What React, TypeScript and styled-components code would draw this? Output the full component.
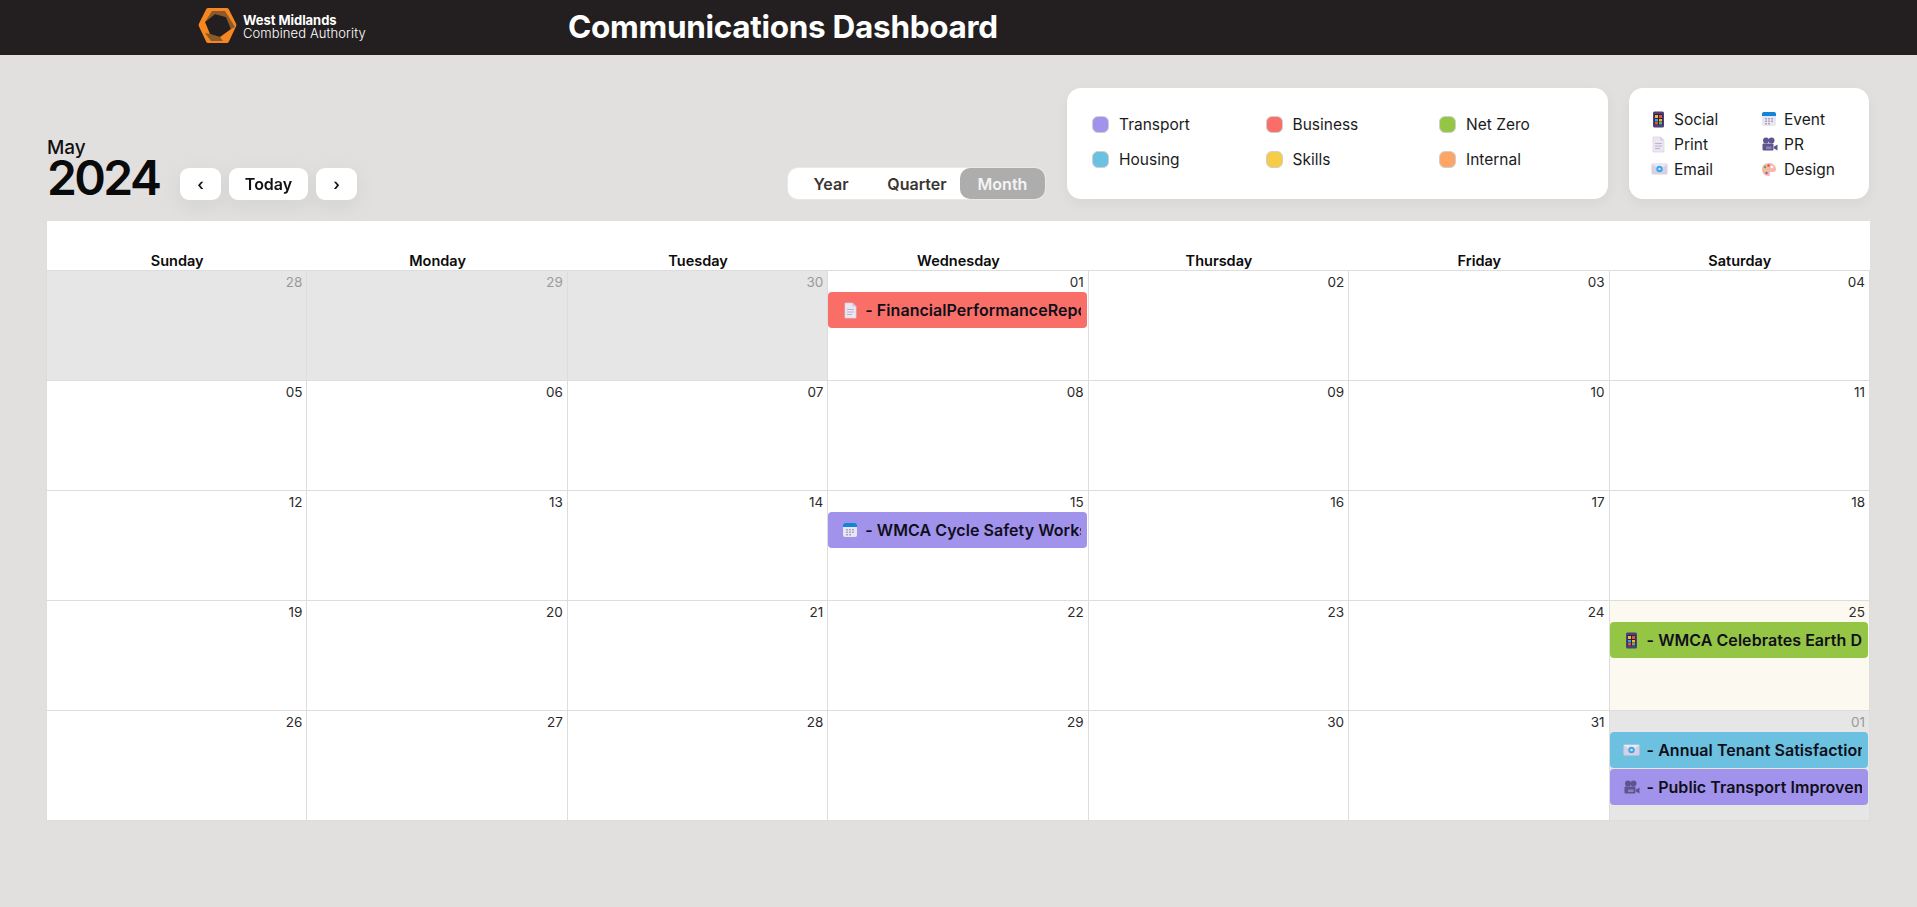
import React from "react"
import styled, { createGlobalStyle } from "styled-components"

const fontStack = `Inter, "Noto Sans", "Liberation Sans", sans-serif`

const colors = {
  transport: "#a192ec",
  business: "#f96f67",
  netZero: "#95c544",
  housing: "#6bc1df",
  skills: "#f6cc47",
  internal: "#fea465",
}

const GlobalStyle = createGlobalStyle`
  * { box-sizing: border-box; }
  html, body { margin: 0; padding: 0; background: #e1e0de; }
  body { font-family: ${fontStack}; color: #111; overflow: hidden; }
`

const Page = styled.div`
  width: 1917px;
  height: 907px;
  background: #e1e0de;
`

const Header = styled.header`
  height: 55px;
  background: #231f20;
  display: flex;
  align-items: center;
  padding: 0 0 2px 198px;
`

const LogoWrap = styled.div`
  width: 370px;
  display: flex;
  align-items: center;
  gap: 6px;
  color: #fff;
  svg { margin-bottom: 3px; }
`

const LogoText = styled.div`
  display: flex;
  flex-direction: column;
  font-size: 13px;
  line-height: 13px;
  letter-spacing: -0.05px;
  b { font-weight: 700; }
  span { font-weight: 300; letter-spacing: 0.1px; }
`

const Title = styled.h1`
  margin: 0;
  color: #fff;
  font-size: 31.500px;
  font-weight: 700;
  letter-spacing: -0.3px;
`

const Main = styled.main`
  padding: 33px 47px 0 46px;
`

const Toolbar = styled.div`
  height: 111px;
  display: flex;
  align-items: flex-end;
`

const DateBlock = styled.div`
  width: 134px;
  display: flex;
  flex-direction: column;
  padding-left: 1px;
  margin-bottom: 1px;
`

const Month = styled.div`
  font-size: 19px;
  font-weight: 500;
  line-height: 20px;
`

const Year = styled.div`
  font-size: 48px;
  font-weight: 600;
  line-height: 40px;
  letter-spacing: -2.600px;
  color: #0a0a0a;
`

const NavGroup = styled.div`
  display: flex;
  gap: 8px;
  margin-bottom: -1px;
  filter: drop-shadow(0 6px 10px rgba(0, 0, 0, 0.06));
`

const NavButton = styled.button<{ $wide?: boolean }>`
  width: ${p => (p.$wide ? 79 : 41)}px;
  height: 32px;
  border: 0;
  border-radius: 9px;
  background: #fff;
  font-family: ${fontStack};
  font-size: 16px;
  font-weight: 600;
  color: #111;
  padding: 0;
`

const ViewToggle = styled.div`
  margin-left: 431px;
  width: 257px;
  height: 31px;
  display: flex;
  background: #fff;
  border-radius: 10px;
  box-shadow: 0 0 0 1px #e8e8e8;
`

const ViewOption = styled.div<{ $active?: boolean; $width: number }>`
  width: ${p => p.$width}px;
  display: flex;
  align-items: center;
  justify-content: center;
  font-size: 16px;
  font-weight: 600;
  border-radius: 10px;
  color: ${p => (p.$active ? "#f4f4f4" : "#3b3533")};
  background: ${p => (p.$active ? "#adadad" : "transparent")};
`

const Card = styled.div`
  height: 111px;
  background: #fff;
  border-radius: 14px;
  box-shadow: 0 4px 14px rgba(0, 0, 0, 0.05);
`

const CategoryCard = styled(Card)`
  margin-left: 22px;
  width: 541px;
  padding: 24px 0 0 25px;
  display: grid;
  grid-template-columns: repeat(3, 173.500px);
  grid-auto-rows: 35px;
`

const TypeCard = styled(Card)`
  margin-left: 21px;
  width: 240px;
  padding: 19px 0 0 22px;
  display: grid;
  grid-template-columns: 110px 1fr;
  grid-auto-rows: 25px;
`

const LegendItem = styled.div`
  display: flex;
  align-items: center;
  height: 24px;
  font-size: 15.500px;
  color: #1b1b1b;
`

const Swatch = styled.span<{ $color: string }>`
  width: 17px;
  height: 17px;
  border-radius: 6px;
  background: ${p => p.$color};
  border: 1px solid #cfcfcf;
  margin-right: 10px;
`

const TypeIcon = styled.span`
  width: 23px;
  display: flex;
  justify-content: flex-start;
  align-items: center;
`

const Calendar = styled.div`
  margin-top: 22px;
  width: 1824px;
  background: #fff;
  display: grid;
  grid-template-columns: repeat(7, 1fr);
  border-left: 1px solid #ddd;
`

const DayHead = styled.div`
  height: 50px;
  display: flex;
  align-items: flex-end;
  justify-content: center;
  padding-bottom: 1px;
  font-size: 14.500px;
  font-weight: 600;
  color: #0c0c0c;
  border-bottom: 1px solid #ddd;
`

const DayCell = styled.div<{ $kind: "normal" | "off" | "today" }>`
  height: 110px;
  min-width: 0;
  border-right: 1px solid #ddd;
  border-bottom: 1px solid #ddd;
  background: ${p =>
    p.$kind === "off" ? "#e6e6e6" : p.$kind === "today" ? "#fcf9f1" : "#fff"};
`

const DayNumber = styled.div<{ $muted?: boolean }>`
  height: 21px;
  padding: 3px 4px 0 0;
  text-align: right;
  font-size: 13.500px;
  line-height: 17px;
  color: ${p => (p.$muted ? "#9a9a9a" : "#2a2a2a")};
`

const EventBar = styled.div<{ $color: string }>`
  height: 36px;
  margin: 0 1px 1px 0;
  border-radius: 4px;
  background: ${p => p.$color};
  display: flex;
  align-items: center;
  padding: 0 6px 0 10px;
  overflow: hidden;
  white-space: nowrap;
  font-size: 16px;
  font-weight: 600;
  letter-spacing: 0.05px;
  color: #0f0f1a;
`

const EventIcon = styled.span`
  flex: none;
  width: 24px;
  display: flex;
  justify-content: center;
  margin-right: 3px;
`

const EventText = styled.span`
  overflow: hidden;
`

const Social = () => (
  <svg width="15" height="17" viewBox="0 0 15 17">
    <rect x="2" y="0.500" width="11" height="16" rx="1.500" fill="#4d3f78" />
    <rect x="3.500" y="3" width="8" height="11" fill="#2b2340" />
    <rect x="4" y="4" width="3" height="3" fill="#f2b632" />
    <rect x="8" y="4" width="3" height="3" fill="#e5533d" />
    <rect x="4" y="8" width="3" height="2.500" fill="#3aa6e8" />
    <rect x="8" y="8" width="3" height="2.500" fill="#f2b632" />
    <rect x="4" y="11" width="3" height="2.500" fill="#e5533d" />
    <rect x="8" y="11" width="3" height="2.500" fill="#58b368" />
  </svg>
)

const Print = () => (
  <svg width="15" height="17" viewBox="0 0 15 17">
    <path d="M2 1h7.500L13 4.500V16H2z" fill="#ebe6f2" stroke="#d9d2e6" strokeWidth="0.700" />
    <path d="M9.500 1v3.500H13z" fill="#cfc6de" />
    <path d="M4 7.500h7M4 10h7M4 12.500h5" stroke="#bdb4cc" strokeWidth="1" />
  </svg>
)

const Email = () => (
  <svg width="17" height="14" viewBox="0 0 17 14">
    <rect x="0.500" y="1.500" width="16" height="11" rx="1" fill="#d6d0e2" />
    <path d="M0.500 2l8 5.500 8-5.500" fill="#ece8f3" />
    <circle cx="8.500" cy="7" r="3.200" fill="#3aa6e8" />
    <circle cx="8.500" cy="7" r="1.300" fill="#bfe3fa" />
  </svg>
)

const Event = () => (
  <svg width="16" height="16" viewBox="0 0 16 16">
    <rect x="1" y="1" width="14" height="14" rx="2" fill="#e9e6f3" />
    <path d="M1 5V3a2 2 0 0 1 2-2h10a2 2 0 0 1 2 2v2z" fill="#1583d8" />
    <path
      d="M4 7h2v1.500H4zM7 7h2v1.500H7zM10 7h2v1.500h-2zM4 9.500h2V11H4zM7 9.500h2V11H7zM10 9.500h2V11h-2zM4 12h2v1.500H4zM7 12h2v1.500H7z"
      fill="#a9a4c4"
    />
  </svg>
)

const Press = () => (
  <svg width="17" height="15" viewBox="0 0 17 15">
    <circle cx="5" cy="3.500" r="3" fill="#5d5590" />
    <circle cx="10.500" cy="3.500" r="3" fill="#5d5590" />
    <rect x="1.500" y="6.500" width="11" height="7" rx="1" fill="#5d5590" />
    <path d="M13 9.500l3.500-2v6l-3.500-2z" fill="#5d5590" />
    <rect x="5" y="9.500" width="5.500" height="2.500" fill="#8b84b5" />
  </svg>
)

const Design = () => (
  <svg width="16" height="15" viewBox="0 0 16 15">
    <path
      d="M8 1C3.800 1 1 3.800 1 7.500S3.800 14 7.500 14c1.500 0 1.800-1 1.300-2-.5-1.100.2-2 1.400-2h2.300c1.700 0 2.500-1.200 2.500-2.700C15 3.500 12 1 8 1z"
      fill="#f6b7ad"
    />
    <circle cx="4" cy="5" r="1.300" fill="#58b368" />
    <circle cx="7.500" cy="3.500" r="1.200" fill="#e5533d" />
    <circle cx="3.500" cy="8.500" r="1.200" fill="#f2d13a" />
    <circle cx="5.500" cy="11" r="1.200" fill="#7a5fd0" />
    <circle cx="11" cy="5" r="1.300" fill="#fff" />
  </svg>
)

const Logo = () => (
  <svg width="39" height="35" viewBox="0 0 39 35">
    <path
      d="M10 0h19a2 2 0 0 1 1.700 1L38 15.500a3 3 0 0 1 0 3L30.700 34a2 2 0 0 1-1.700 1H10a2 2 0 0 1-1.700-1L1 18.500a3 3 0 0 1 0-3L8.300 1A2 2 0 0 1 10 0z"
      fill="#f6861f"
    />
    <path d="M7 14L14 3 27 3 37 19 33 21 28 9 17 6z" fill="#8a5a2b" />
    <path d="M12 26L22 29 25 33 13 33 7 25z" fill="#8a5a2b" />
    <path d="M17 6L28 9 33 21 22 29 12 26 7 14z" fill="#231f20" />
  </svg>
)

const categories = [
  ["Transport", colors.transport],
  ["Business", colors.business],
  ["Net Zero", colors.netZero],
  ["Housing", colors.housing],
  ["Skills", colors.skills],
  ["Internal", colors.internal],
]

const types = [
  ["Social", <Social />],
  ["Event", <Event />],
  ["Print", <Print />],
  ["PR", <Press />],
  ["Email", <Email />],
  ["Design", <Design />],
] as const

const dayNames = ["Sunday", "Monday", "Tuesday", "Wednesday", "Thursday", "Friday", "Saturday"]

type CalEvent = { icon: React.ReactNode; color: string; title: string }

const events: Record<string, CalEvent[]> = {
  "5-1": [{ icon: <Print />, color: colors.business, title: "FinancialPerformanceReport" }],
  "5-15": [{ icon: <Event />, color: colors.transport, title: "WMCA Cycle Safety Workshop" }],
  "5-25": [{ icon: <Social />, color: colors.netZero, title: "WMCA Celebrates Earth Day" }],
  "6-1": [
    { icon: <Email />, color: colors.housing, title: "Annual Tenant Satisfaction Survey" },
    { icon: <Press />, color: colors.transport, title: "Public Transport Improvements" },
  ],
}

const days = [
  ...[28, 29, 30].map(d => ({ month: 4, day: d })),
  ...Array.from({ length: 31 }, (_, i) => ({ month: 5, day: i + 1 })),
  { month: 6, day: 1 },
]

const App = () => (
  <Page>
    <GlobalStyle />
    <Header>
      <LogoWrap>
        <Logo />
        <LogoText>
          <b>West Midlands</b>
          <span>Combined Authority</span>
        </LogoText>
      </LogoWrap>
      <Title>Communications Dashboard</Title>
    </Header>
    <Main>
      <Toolbar>
        <DateBlock>
          <Month>May</Month>
          <Year>2024</Year>
        </DateBlock>
        <NavGroup>
          <NavButton>‹</NavButton>
          <NavButton $wide>Today</NavButton>
          <NavButton>›</NavButton>
        </NavGroup>
        <ViewToggle>
          <ViewOption $width={86}>Year</ViewOption>
          <ViewOption $width={86}>Quarter</ViewOption>
          <ViewOption $width={85} $active>
            Month
          </ViewOption>
        </ViewToggle>
        <CategoryCard>
          {categories.map(([name, color]) => (
            <LegendItem key={name}>
              <Swatch $color={color} />
              {name}
            </LegendItem>
          ))}
        </CategoryCard>
        <TypeCard>
          {types.map(([name, icon]) => (
            <LegendItem key={name}>
              <TypeIcon>{icon}</TypeIcon>
              {name}
            </LegendItem>
          ))}
        </TypeCard>
      </Toolbar>
      <Calendar>
        {dayNames.map(name => (
          <DayHead key={name}>{name}</DayHead>
        ))}
        {days.map(({ month, day }) => {
          const off = month !== 5
          const today = month === 5 && day === 25
          return (
            <DayCell key={`${month}-${day}`} $kind={off ? "off" : today ? "today" : "normal"}>
              <DayNumber $muted={off}>{String(day).padStart(2, "0")}</DayNumber>
              {(events[`${month}-${day}`] ?? []).map(ev => (
                <EventBar key={ev.title} $color={ev.color}>
                  <EventIcon>{ev.icon}</EventIcon>
                  <EventText>- {ev.title}</EventText>
                </EventBar>
              ))}
            </DayCell>
          )
        })}
      </Calendar>
    </Main>
  </Page>
)

export default App
